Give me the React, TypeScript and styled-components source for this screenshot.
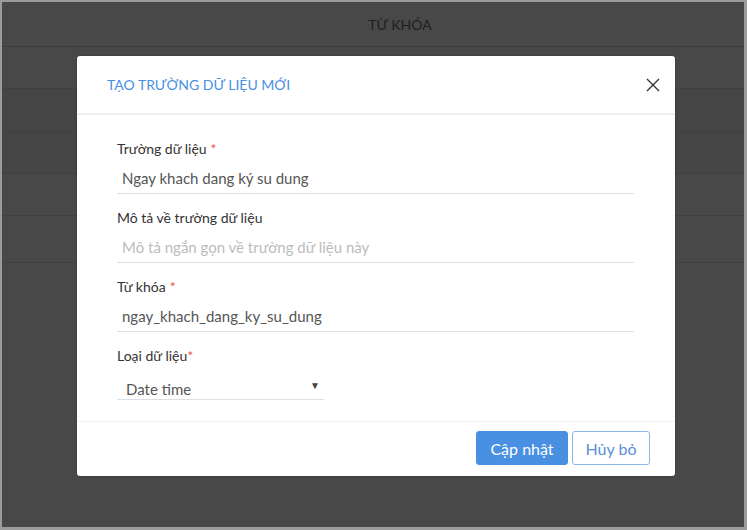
import React from "react";
import styled, { createGlobalStyle } from "styled-components";

const Global = createGlobalStyle`
  html, body { margin: 0; padding: 0; background: #484848; }
  * { box-sizing: border-box; }
  body { font-family: Lato, "Noto Sans", sans-serif; }
`;

const Page = styled.div`
  position: relative;
  width: 747px;
  height: 530px;
  border-style: solid;
  border-color: #9b9b9b;
  border-width: 2px 3px 3px 2px;
  background: #484848;
  overflow: hidden;
`;

const Table = styled.div`
  display: flex;
  flex-direction: column;
`;

const HeaderRow = styled.div`
  display: grid;
  grid-template-columns: 250px 296px 1fr;
  height: 45px;
  align-items: center;
  border-bottom: 1px solid #3b3b3b;
  color: #1f1f1f;
  font-size: 14px;
`;

const HeaderCell = styled.div`
  text-align: center;
`;

const Row = styled.div<{ $dark?: boolean; $h?: number }>`
  height: ${(p) => p.$h ?? 42}px;
  border-bottom: 1px solid #404040;
  background: ${(p) => (p.$dark ? "#454545" : "#484848")};
`;

const Modal = styled.div`
  position: absolute;
  left: 75px;
  top: 54px;
  width: 598px;
  height: 420px;
  background: #fff;
  border-radius: 3px;
  display: flex;
  flex-direction: column;
  box-shadow: 0 0 2px rgba(0, 0, 0, 0.3);
`;

const ModalHeader = styled.div`
  height: 59px;
  display: flex;
  align-items: center;
  justify-content: space-between;
  padding: 0 14px 0 30px;
  border-bottom: 2px solid #eeeeee;
`;

const Title = styled.h2`
  margin: 0;
  font-size: 14px;
  font-weight: 400;
  color: #4a90e2;
`;

const CloseButton = styled.button`
  width: 16px;
  height: 16px;
  padding: 0;
  border: none;
  background: transparent;
  display: flex;
  align-items: center;
  justify-content: center;
  cursor: pointer;
`;

const Body = styled.div`
  flex: 1;
  padding: 24px 41px 0 40px;
  display: flex;
  flex-direction: column;
  border-bottom: 1px solid #f0f0f0;
`;

const Field = styled.div`
  display: flex;
  flex-direction: column;
  margin-bottom: 14px;
`;

const Label = styled.label`
  font-size: 14px;
  line-height: 20px;
  color: #333;
  margin-bottom: 7px;
`;

const Req = styled.span<{ $tight?: boolean }>`
  color: #e8584f;
  margin-left: ${(p) => (p.$tight ? "0" : "4px")};
`;

const Input = styled.input`
  height: 28px;
  border: none;
  border-bottom: 1px solid #dcdfe8;
  padding: 0 0 3px 5px;
  font-family: inherit;
  font-size: 15px;
  color: #555;
  outline: none;
  &::placeholder {
    color: #bcbcbc;
  }
`;

const SelectBox = styled.div`
  position: relative;
  width: 207px;
  height: 27px;
  border-bottom: 1px solid #dcdfe8;
  padding: 7px 0 0 9px;
  font-size: 15px;
  line-height: 18px;
  color: #555;
`;

const Arrow = styled.span`
  position: absolute;
  right: 4px;
  top: 7px;
  font-size: 10px;
  line-height: 1;
  color: #444;
`;

const Footer = styled.div`
  height: 54px;
  display: flex;
  justify-content: flex-end;
  align-items: flex-start;
  gap: 4px;
  padding: 9px 25px 0 0;
`;

const Button = styled.button<{ $primary?: boolean }>`
  height: 34px;
  border-radius: 3px;
  font-family: inherit;
  font-size: 16px;
  cursor: pointer;
  border: 1px solid ${(p) => (p.$primary ? "#4a90e2" : "#8ab6ec")};
  background: ${(p) => (p.$primary ? "#4a90e2" : "#fff")};
  color: ${(p) => (p.$primary ? "#fff" : "#5b8fd8")};
  width: ${(p) => (p.$primary ? "92px" : "78px")};
`;

export default function App() {
  return (
    <>
      <Global />
      <Page>
        <Table>
          <HeaderRow>
            <div />
            <HeaderCell>TỪ KHÓA</HeaderCell>
            <div />
          </HeaderRow>
          <Row />
          <Row $dark $h={43} />
          <Row $dark />
          <Row />
          <Row $h={47} />
        </Table>
        <Modal>
          <ModalHeader>
            <Title>TẠO TRƯỜNG DỮ LIỆU MỚI</Title>
            <CloseButton aria-label="close">
              <svg width="14" height="14" viewBox="0 0 14 14">
                <path d="M1 1 L13 13 M13 1 L1 13" stroke="#333" strokeWidth="1.4" fill="none" />
              </svg>
            </CloseButton>
          </ModalHeader>
          <Body>
            <Field>
              <Label>
                Trường dữ liệu<Req>*</Req>
              </Label>
              <Input defaultValue="Ngay khach dang ký su dung" />
            </Field>
            <Field>
              <Label>Mô tả về trường dữ liệu</Label>
              <Input placeholder="Mô tả ngắn gọn về trường dữ liệu này" />
            </Field>
            <Field>
              <Label>
                Từ khóa<Req>*</Req>
              </Label>
              <Input defaultValue="ngay_khach_dang_ky_su_dung" />
            </Field>
            <Field>
              <Label>
                Loại dữ liệu<Req $tight>*</Req>
              </Label>
              <SelectBox>
                Date time
                <Arrow>▼</Arrow>
              </SelectBox>
            </Field>
          </Body>
          <Footer>
            <Button $primary>Cập nhật</Button>
            <Button>Hủy bỏ</Button>
          </Footer>
        </Modal>
      </Page>
    </>
  );
}
